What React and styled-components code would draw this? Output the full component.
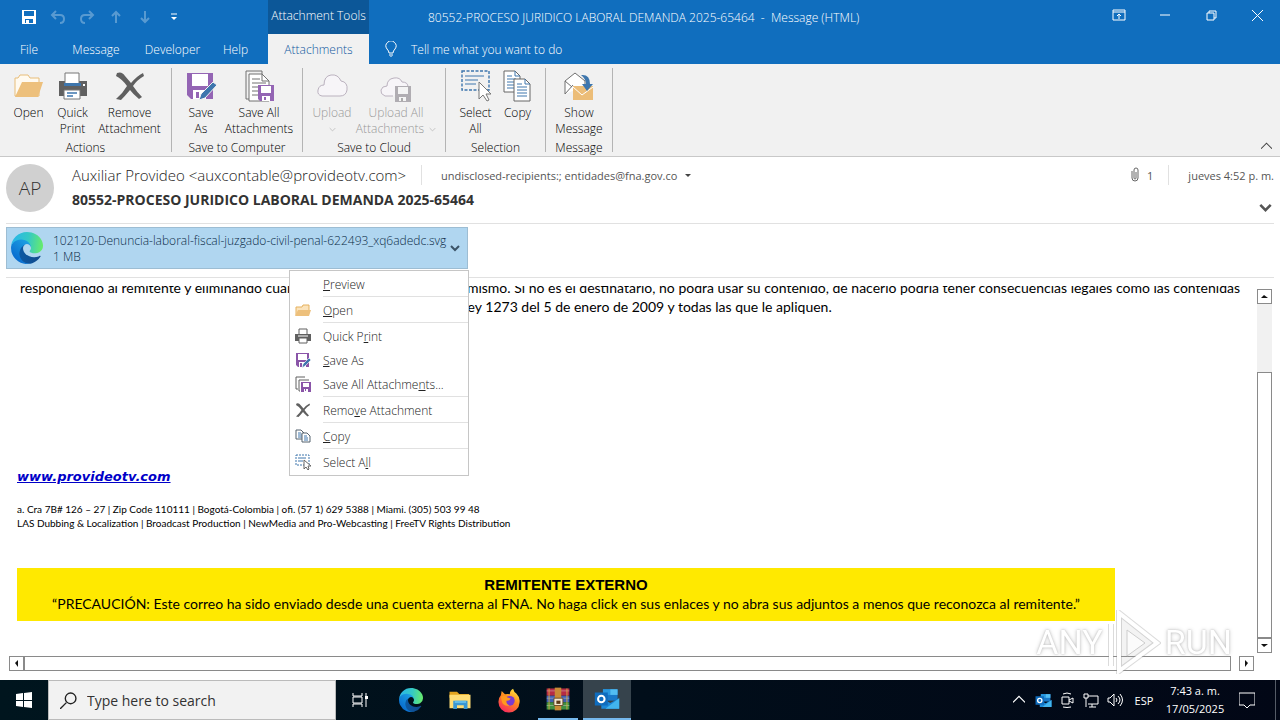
import { Fragment, useState } from "react";
import styled, { createGlobalStyle, css } from "styled-components";

const GlobalStyle = createGlobalStyle`
  * {
    box-sizing: border-box;
  }

  body {
    margin: 0;
    background-color: #fff;
    font-family: "Open Sans", "Noto Sans", sans-serif;
    font-size: 12px;
    font-weight: 340;
    color: #000;
  }

  button {
    margin: 0;
    padding: 0;
    border: 0;
    background: none;
    font: inherit;
    color: inherit;
  }

  svg {
    display: block;
    flex-shrink: 0;
  }
`;

const Window = styled.div`
  display: flex;
  flex-direction: column;
  min-height: 100vh;
  overflow: hidden;
`;

/* title bar and tabs */

const Header = styled.header`
  background-color: #106ebe;
  color: #fff;
`;

const TitleBar = styled.div`
  display: flex;
  height: 34px;
`;

const QuickAccess = styled.div`
  display: flex;
  align-items: center;
  width: 268px;
  padding-left: 14px;
`;

const QuickButton = styled.button`
  display: flex;
  justify-content: center;
  width: 29px;
  opacity: ${(props) => (props.disabled ? 0.3 : 1)};
`;

const ContextTitle = styled.div`
  width: 101px;
  background-color: #0c5798;
  line-height: 32px;
  text-align: center;
  white-space: nowrap;
`;

const WindowTitle = styled.div`
  flex: 1;
  padding-left: 59px;
  line-height: 35px;
  white-space: pre;
`;

const WindowButtons = styled.div`
  display: flex;
`;

const WindowButton = styled.button`
  display: flex;
  align-items: center;
  justify-content: center;
  width: 46px;
  height: 30px;
`;

const Tabs = styled.nav`
  display: flex;
  height: 30px;
  padding-left: 8px;
`;

const Tab = styled.button`
  width: ${(props) => props.$width}px;
  height: 30px;
  ${(props) =>
    props.$active &&
    css`
      background-color: #f1f1f1;
      color: #10599f;
    `}
`;

const TellMe = styled.button`
  display: flex;
  align-items: center;
  gap: 12px;
  padding-left: 14px;
`;

/* ribbon */

const Ribbon = styled.div`
  display: flex;
  height: 93px;
  padding: 4px 8px 4px 0;
  background-color: #f1f1f1;
  border-bottom: 1px solid #c8c8c8;
`;

const Group = styled.section`
  display: flex;
  flex-direction: column;
  justify-content: space-between;
  width: ${(props) => props.$width}px;
  border-right: 1px solid #b4b4b4;
`;

const GroupButtons = styled.div`
  display: flex;
  justify-content: center;
`;

const GroupLabel = styled.div`
  line-height: 8px;
  text-align: center;
`;

const RibbonButton = styled.button`
  display: flex;
  flex-direction: column;
  align-items: center;
  width: ${(props) => props.$width}px;
  padding-top: 2px;
  line-height: 16px;
  white-space: nowrap;
  color: ${(props) => (props.disabled ? "#999" : "#000")};
`;

const ButtonLine = styled.span`
  display: flex;
  align-items: center;
  gap: 5px;
  min-height: 16px;
`;

const ButtonIcon = styled.span`
  display: block;
  height: 35px;
`;

const Collapse = styled.button`
  align-self: flex-end;
  margin-left: auto;
`;

/* message header */

const MessageHeader = styled.section`
  display: flex;
  gap: 18px;
  height: 67px;
  margin: 0 6px;
  padding-top: 7px;
  border-bottom: 1px solid #e1e1e1;
`;

const Avatar = styled.div`
  flex-shrink: 0;
  width: 48px;
  height: 48px;
  border-radius: 50%;
  background-color: #d0d0d0;
  color: #333;
  font-size: 19px;
  line-height: 48px;
  text-align: center;
`;

const HeaderLines = styled.div`
  flex: 1;
`;

const HeaderLine = styled.div`
  display: flex;
  align-items: center;
  height: 22px;
  font-size: 11px;
  font-weight: 400;
  color: #555;
`;

const Sender = styled.span`
  width: 349px;
  font-size: 15px;
  font-weight: 300;
  line-height: 20px;
  color: #222;
  white-space: nowrap;
`;

const Recipients = styled.span`
  display: flex;
  align-items: center;
  gap: 8px;
  flex: 1;
  padding-left: 19px;
`;

const Separator = styled.span`
  width: 1px;
  height: 20px;
  background-color: #e1e1e1;
`;

const AttachmentCount = styled.span`
  display: flex;
  align-items: center;
  gap: 4px;
  padding-right: 15px;
`;

const Received = styled.span`
  padding-left: 19px;
`;

const SubjectLine = styled.div`
  display: flex;
  align-items: flex-end;
  justify-content: space-between;
  height: 28px;
  padding-right: 2px;
`;

const Subject = styled.h1`
  margin: 0;
  font-size: 14px;
  font-weight: 700;
  line-height: 28px;
  color: #333;
`;

const AttachmentBar = styled.section`
  height: 54px;
  margin: 0 6px;
  padding-top: 3px;
  border-bottom: 1px solid #e1e1e1;
`;

const AttachmentItem = styled.div`
  position: relative;
  max-width: 462px;
`;

const AttachmentButton = styled.button`
  display: flex;
  align-items: center;
  width: 100%;
  height: 42px;
  padding: 0 7px 0 4px;
  background-color: #b0d6f0;
  border: 1px solid #9dbdd3;
  color: #0c2c48;
  font-size: 12px;
  font-weight: 300;
  line-height: 16px;
  text-align: left;
`;

const AttachmentText = styled.span`
  flex: 1;
  padding-top: 2px;
  padding-left: 10px;
  white-space: nowrap;
`;

const FileSize = styled.span`
  display: block;
`;

const Menu = styled.div`
  position: absolute;
  z-index: 2;
  top: 43px;
  right: -1px;
  width: 180px;
  padding: 1px 0;
  background-color: #fff;
  border: 1px solid #c6c6c6;
  color: #222;
`;

const MenuItem = styled.button`
  display: flex;
  align-items: center;
  gap: 12px;
  width: 100%;
  height: 24px;
  padding-left: 5px;
`;

const MenuIcon = styled.span`
  width: 16px;
`;

const MenuRule = styled.hr`
  height: 1px;
  margin: 0 0 1px 33px;
  border: 0;
  background-color: #e1e1e1;
`;

/* message body */

const Body = styled.main`
  display: grid;
  flex: 1;
  grid-template-columns: 1fr 15px;
  grid-template-rows: 1fr 15px;
  gap: 3px;
  padding: 8px 8px 9px 9px;
`;

const Content = styled.article`
  height: 367px;
  padding: 0 11px 0 8px;
  overflow: hidden;
  font-family: Lato, sans-serif;
  font-size: 14px;
  font-weight: 400;
  line-height: 19px;
  color: #000;
`;

const Disclaimer = styled.p`
  margin: -8px 0 0;
  height: 188px;
  text-align: center;
  white-space: nowrap;
`;

const SiteLink = styled.a`
  display: inline-block;
  font-family: "DejaVu Sans", Verdana, sans-serif;
  font-size: 13px;
  font-weight: 700;
  font-style: italic;
  color: #0000c8;
`;

const Address = styled.address`
  margin: 16px 0 38px;
  font-size: 10px;
  font-style: normal;
  line-height: 14px;
`;

const Banner = styled.aside`
  max-width: 1098px;
  padding: 8px 0;
  background-color: #ffe900;
  text-align: center;
`;

const BannerTitle = styled.strong`
  display: block;
  font-family: "Liberation Sans", Arial, sans-serif;
  font-size: 15px;
  font-weight: 700;
  line-height: 18px;
`;

const ScrollBar = styled.div`
  display: flex;
  flex-direction: ${(props) => (props.$vertical ? "column" : "row")};
  ${(props) =>
    props.$vertical &&
    css`
      margin-top: 3px;
      background-color: #f1f1f1;
    `}
`;

const ScrollButton = styled.button`
  display: flex;
  align-items: center;
  justify-content: center;
  width: 15px;
  height: 15px;
  border: 1px solid #8a8a8a;
  background-color: #fff;
`;

const ScrollSpace = styled.div`
  flex: 0 0 ${(props) => props.$size}px;
`;

const ScrollThumb = styled.div`
  flex: 1;
  background-color: #fff;
  border: 1px solid #8a8a8a;
`;

const Watermark = styled.div`
  position: fixed;
  z-index: 3;
  right: 48px;
  bottom: 46px;
  display: flex;
  align-items: center;
  gap: 4px;
  color: #fff;
  font-family: Roboto, sans-serif;
  font-size: 34px;
  font-weight: 400;
  text-shadow: 0 0 2px #bbb, 0 0 4px #ccc;
  pointer-events: none;
`;

/* taskbar */

const Taskbar = styled.footer`
  display: flex;
  height: 40px;
  background: linear-gradient(90deg, #00151e, #020716);
  color: #fff;
`;

const TaskButton = styled.button`
  display: flex;
  align-items: center;
  justify-content: center;
  width: 48px;
  height: 40px;
  ${(props) =>
    props.$running &&
    css`
      width: 40px;
      margin: 0 4px;
      border-bottom: 2px solid #76b9ed;
    `}
  ${(props) =>
    props.$active &&
    css`
      background-color: #36434c;
      border-bottom: 2px solid #76b9ed;
    `}
`;

const SearchBox = styled.label`
  display: flex;
  align-items: center;
  gap: 10px;
  width: 288px;
  padding-left: 11px;
  background-color: #f2f2f2;
  border: 1px solid #bbb;
`;

const SearchInput = styled.input`
  width: 200px;
  padding: 0;
  border: 0;
  outline: 0;
  background: none;
  font-family: inherit;
  font-size: 14px;
  font-weight: 400;

  &::placeholder {
    color: #333;
    opacity: 1;
  }
`;

const Pinned = styled.div`
  display: flex;
  gap: 1px;
  padding-left: 3px;
`;

const Tray = styled.div`
  display: flex;
  align-items: center;
  margin-left: auto;
`;

const TrayButton = styled.button`
  display: flex;
  align-items: center;
  justify-content: center;
  width: ${(props) => props.$width || 24}px;
  font-size: 11px;
  font-weight: 400;
`;

const Clock = styled.time`
  width: 68px;
  font-size: 11px;
  font-weight: 400;
  line-height: 18px;
  text-align: center;
`;

const ShowDesktop = styled.button`
  align-self: stretch;
  width: 5px;
  margin-left: 10px;
  border-left: 1px solid #555b66;
`;

/* icons */

const Icon = ({ size = 16, box = 32, children }) => (
  <svg width={size} height={size} viewBox={`0 0 ${box} ${box}`} fill="none" aria-hidden="true">
    {children}
  </svg>
);

const Chevron = ({ up, size = 10, weight = 1, color = "#444" }) => (
  <Icon size={size} box={10}>
    <path d={up ? "M0 7l5-5 5 5" : "M1 3l4 4 4-4"} stroke={color} strokeWidth={weight} />
  </Icon>
);

const Arrow = ({ d }) => (
  <Icon size={9} box={9}>
    <path d={d} fill="#111" />
  </Icon>
);

const FolderIcon = ({ size }) => (
  <Icon size={size}>
    <path d="M2 26V8h3l2-3h8l2 3h9v18z" fill="#fffaf0" stroke="#e8bd78" />
    <path d="M2 27L9 12h21l-5 15z" fill="#edc07c" />
  </Icon>
);

const SmallFolderIcon = ({ size }) => (
  <Icon size={size} box={16}>
    <path d="M1 13V5h6l1-2h6v5" fill="#fbe3bb" stroke="#e5b15e" />
    <path d="M0 14l3-6h13l-2 6z" fill="#edc07c" />
  </Icon>
);

const PrinterIcon = ({ size }) => (
  <Icon size={size}>
    <path d="M2 11h28v15H2z" fill="#606060" />
    <path d="M8 14V3h14v11z" fill="#fff" stroke="#777" />
    <path d="M7 13h17v3H7z" fill="#3e76ad" />
    <path d="M7 20h16v9H7z" fill="#fff" stroke="#777" />
    <path d="M10 23h10M10 26h6" stroke="#3e76ad" strokeWidth="1.5" />
    <path d="M26 14h2v2h-2z" fill="#fff" />
  </Icon>
);

const SmallPrinterIcon = ({ size }) => (
  <Icon size={size} box={16}>
    <path d="M0 6h16v7H0z" fill="#606060" />
    <path d="M4 6V1h8v5" fill="#fff" stroke="#606060" />
    <path d="M4 10h8v5H4z" fill="#fff" stroke="#606060" />
    <path d="M3 8h10" stroke="#fff" />
  </Icon>
);

const RemoveIcon = ({ size }) => (
  <Icon size={size}>
    <path
      d="M3 3q5-2 8 3l6 7q6-7 12-10l1 3q-7 4-11 10 4 6 9 11l-3 2q-6-5-9-9-5 6-9 10l-5-1q7-6 11-13Q8 9 2 6z"
      fill="#606060"
    />
  </Icon>
);

const FloppyPenIcon = ({ size }) => (
  <Icon size={size}>
    <path d="M2 3h26v26H6l-4-4z" fill="#9465b4" />
    <path d="M7 4h16v12H7z" fill="#fff" />
    <path d="M8 20h13v9H8z" fill="#fff" />
    <path d="M11 22h3v6h-3z" fill="#9465b4" />
    <path d="M14 30l2-6 12-12 4 3-12 13z" fill="#3e76ad" stroke="#f1f1f1" />
  </Icon>
);

const SmallFloppyPenIcon = ({ size }) => (
  <Icon size={size} box={16}>
    <path d="M1 1h13v14H3l-2-2z" fill="#8a55a8" />
    <path d="M3 2h9v6H3zM4 10h7v5H4z" fill="#fff" />
    <path d="M5 11h2v4H5z" fill="#8a55a8" />
    <path d="M7 16l1-4 6-6 2 2-6 6z" fill="#3e76ad" stroke="#fff" strokeWidth="0.600" />
  </Icon>
);

const FloppySheetsIcon = ({ size }) => (
  <Icon size={size}>
    <path d="M7 29H3V1h16v4" stroke="#707070" />
    <path d="M6 31V4h13l7 7v20z" fill="#fff" stroke="#707070" />
    <path d="M19 4v7h7M9 9h8M9 13h14M9 17h14M9 21h8M9 25h8" stroke="#707070" />
    <path d="M15 15h16v16H17l-2-2z" fill="#9465b4" />
    <path d="M18 16h10v7H18zM19 26h8v5h-8z" fill="#fff" />
    <path d="M21 27h2v3h-2z" fill="#9465b4" />
  </Icon>
);

const SmallFloppySheetsIcon = ({ size }) => (
  <Icon size={size} box={16}>
    <path d="M3 13H1V1h9M5 15H4V4h10" stroke="#606060" />
    <path d="M6 6h10v10H6z" fill="#8a55a8" />
    <path d="M8 7h6v4H8zM9 13h4v3H9z" fill="#fff" />
    <path d="M10 13h1v2h-1z" fill="#8a55a8" />
  </Icon>
);

const CloudIcon = () => (
  <Icon size={32}>
    <path d="M6 26Q1 25 2 20q1-5 6-5Q8 6 15 5q7-1 10 6 7 1 6 9-1 6-7 6z" fill="#f7f5f8" stroke="#bbb2bf" />
  </Icon>
);

const CloudFloppyIcon = () => (
  <Icon size={32}>
    <path d="M13 26H5q-5-2-4-6 1-4 6-4 0-7 7-8 6-1 8 4 6 0 6 5" fill="#f7f5f8" stroke="#bbb2bf" />
    <path d="M15 16h16v16H15z" fill="#b0adb2" />
    <path d="M18 17h10v7H18zM19 27h7v4h-7z" fill="#f4f4f4" />
    <path d="M21 28h2v3h-2z" fill="#aaa" />
  </Icon>
);

const SelectIcon = ({ size }) => (
  <Icon size={size}>
    <path d="M2 1h27v19H2z" stroke="#3e76ad" strokeWidth="1.4" strokeDasharray="3 1.5" />
    <path d="M5 6h19M5 10h13M5 14h11" stroke="#3e76ad" />
    <path d="M19 12v17l4-4 4 6 2-1-3-6h5z" fill="#fff" stroke="#777" />
  </Icon>
);

const SmallSelectIcon = ({ size }) => (
  <Icon size={size} box={16}>
    <path d="M1 1h13v10H1z" stroke="#3e76ad" strokeDasharray="2 1" />
    <path d="M3 4h8M3 7h5" stroke="#3e76ad" />
    <path d="M9 6v9l2-2 2 3 1-1-1-3h3z" fill="#fff" stroke="#666" />
  </Icon>
);

const CopyIcon = ({ size }) => (
  <Icon size={size}>
    <path d="M2 22V1h11l5 5v16z" fill="#fff" stroke="#666" />
    <path d="M13 1v5h5M5 6h5M5 9h9M5 12h9M5 15h9M5 18h9" stroke="#3e76ad" />
    <path d="M12 31V9h11l5 5v17z" fill="#fff" stroke="#666" />
    <path d="M23 9v5h5M15 14h5M15 17h10M15 20h10M15 23h10M15 26h10" stroke="#3e76ad" />
  </Icon>
);

const SmallCopyIcon = ({ size }) => (
  <Icon size={size} box={16}>
    <path d="M1 11V2h5l3 3v6z" fill="#fff" stroke="#55626e" />
    <path d="M3 5h3M3 7h4M3 9h4" stroke="#3e76ad" />
    <path d="M7 14V5h5l3 3v6z" fill="#fff" stroke="#55626e" />
    <path d="M9 8h3M9 10h4M9 12h4" stroke="#3e76ad" />
  </Icon>
);

const ShowMessageIcon = () => (
  <Icon size={32}>
    <path d="M2 24V11L12 3l10 8v5" fill="#fff" stroke="#707070" />
    <path d="M2 24l8-9M2 11l7 6" stroke="#707070" />
    <path d="M10 16h20v14H10z" fill="#ecbd78" />
    <path d="M10 17l9 8 11-8" stroke="#fff" />
    <path d="M18 5q9-1 9 9h3l-6 7-5-7h4q0-5-5-9z" fill="#3e76ad" />
  </Icon>
);

const EdgeIcon = ({ size }) => (
  <Icon size={size} box={256}>
    <defs>
      <linearGradient id="edgeDark" x1="60" y1="180" x2="240" y2="180" gradientUnits="userSpaceOnUse">
        <stop stopColor="#0c59a4" />
        <stop offset="1" stopColor="#114a8b" />
      </linearGradient>
      <linearGradient id="edgeBlue" x1="150" y1="100" x2="45" y2="215" gradientUnits="userSpaceOnUse">
        <stop stopColor="#1b9de2" />
        <stop offset="1" stopColor="#0a6fd0" />
      </linearGradient>
      <linearGradient id="edgeGreen" x1="20" y1="80" x2="250" y2="110" gradientUnits="userSpaceOnUse">
        <stop stopColor="#2ab8e6" />
        <stop offset="0.5" stopColor="#35c9c4" />
        <stop offset="1" stopColor="#66eb6e" />
      </linearGradient>
    </defs>
    <path
      fill="url(#edgeDark)"
      d="M231 190.500a93.700 93.700 0 0 1-10.500 4.700 101.900 101.900 0 0 1-35.900 6.500c-47.300 0-88.500-32.600-88.500-74.300a31.500 31.500 0 0 1 16.400-27.300c-42.800 1.800-53.800 46.400-53.800 72.500 0 73.900 68.100 81.400 82.800 81.400 7.900 0 19.800-2.300 27-4.600l1.300-.4a128.300 128.300 0 0 0 66.600-52.800 4 4 0 0 0-5.400-5.700z"
    />
    <path
      fill="url(#edgeBlue)"
      d="M105.700 241.400a79.200 79.200 0 0 1-22.700-21.300 80.700 80.700 0 0 1 29.500-120c3.100-1.500 8.500-4.100 15.500-4a32.400 32.400 0 0 1 25.700 13 31.900 31.900 0 0 1 6.400 18.700c0-.2 24.500-79.600-80-79.600-43.900 0-80 41.600-80 78.200a130.200 130.200 0 0 0 12.100 56 128 128 0 0 0 156.400 67.100 75.600 75.600 0 0 1-62.800-8z"
    />
    <path
      fill="url(#edgeGreen)"
      d="M152.300 148.900c-.8 1-3.300 2.500-3.300 5.700 0 2.600 1.700 5.100 4.700 7.200 14.400 10 41.500 8.700 41.600 8.700a59.600 59.600 0 0 0 30.300-8.400A61.400 61.400 0 0 0 256 109.200c.3-22.400-8-37.300-11.300-43.900C223.500 23.800 177.700 0 128 0A128 128 0 0 0 0 126.200c.5-36.500 36.800-66 80-66 3.500 0 23.500.3 42 10 16.300 8.600 24.900 19 30.900 29.200 6.200 10.700 7.300 24.200 7.300 29.500s-2.800 13.400-7.900 20z"
    />
  </Icon>
);

const OutlookIcon = ({ size }) => (
  <Icon size={size}>
    <path d="M11 4h18v14H11z" fill="#1978c8" />
    <path d="M11 4h9v7h-9z" fill="#2898e0" />
    <path d="M20 4h9v7h-9z" fill="#52bdf2" />
    <path d="M9 15l11 6 11-6v13H9z" fill="#1b88d8" />
    <path d="M31 15v13H14z" fill="#42b5ee" />
    <path d="M1 8h16v16H1z" fill="#0f6cbd" />
    <circle cx="9" cy="16" r="4" stroke="#fff" strokeWidth="2.500" />
  </Icon>
);

const ExplorerIcon = () => (
  <Icon size={24}>
    <path d="M2 5h10l3 3h13v5H2z" fill="#e3a41e" />
    <path d="M2 9h28v18H2z" fill="#ffdd75" />
    <path d="M7 28V17h19v11h-5v-5h-9v5z" fill="#3997d3" />
    <path d="M9 17h15v3H9z" fill="#62bce8" />
  </Icon>
);

const FirefoxIcon = () => (
  <Icon size={26}>
    <defs>
      <linearGradient id="fox" x1="24" y1="3" x2="8" y2="29" gradientUnits="userSpaceOnUse">
        <stop stopColor="#ffe53e" />
        <stop offset="0.450" stopColor="#ff8a1e" />
        <stop offset="1" stopColor="#f82c5c" />
      </linearGradient>
    </defs>
    <path d="M7 5l4 4q4-1 6 0 0-5 4-7 1 4 4 6 5 5 4 11a13 13 0 0 1-26-1q0-5 3-8z" fill="url(#fox)" />
    <circle cx="17" cy="17" r="6" fill="#7a3bd0" />
    <path d="M6 12q5-3 8 1l4 1q-1 3-5 3-1 4 4 6-9 1-10-6z" fill="#ff9a1e" />
  </Icon>
);

const WinrarIcon = () => (
  <Icon size={26}>
    <path d="M2 3h28v9H2z" fill="#b52b45" />
    <path d="M2 12h28v8H2z" fill="#4060b0" />
    <path d="M2 20h28v9H2z" fill="#3e8f42" />
    <path d="M2 6h28M2 15h28M2 24h28" stroke="#ddd" strokeOpacity="0.500" />
    <path d="M12 2h8v28h-8z" fill="#c98a36" />
    <path d="M11 15h11v9H11z" fill="#f1e6ce" stroke="#5b3a17" />
    <path d="M14 18h5v4h-5z" fill="#5b3a17" />
    <path d="M5 3v26M27 3v26" stroke="#e0b23d" />
  </Icon>
);

const groups = [
  {
    label: "Actions",
    width: 172,
    buttons: [
      { lines: ["Open"], width: 44, icon: FolderIcon },
      { lines: ["Quick", "Print"], width: 44, icon: PrinterIcon },
      { lines: ["Remove", "Attachment"], width: 70, icon: RemoveIcon },
    ],
  },
  {
    label: "Save to Computer",
    width: 131,
    buttons: [
      { lines: ["Save", "As"], width: 44, icon: FloppyPenIcon },
      { lines: ["Save All", "Attachments"], width: 72, icon: FloppySheetsIcon },
    ],
  },
  {
    label: "Save to Cloud",
    width: 143,
    buttons: [
      { lines: ["Upload", ""], width: 44, icon: CloudIcon, disabled: true },
      { lines: ["Upload All", "Attachments"], width: 84, icon: CloudFloppyIcon, disabled: true },
    ],
  },
  {
    label: "Selection",
    width: 100,
    buttons: [
      { lines: ["Select", "All"], width: 44, icon: SelectIcon },
      { lines: ["Copy"], width: 40, icon: CopyIcon },
    ],
  },
  {
    label: "Message",
    width: 67,
    buttons: [{ lines: ["Show", "Message"], width: 60, icon: ShowMessageIcon }],
  },
];

//the key is the underlined letter of the label
const menuItems = [
  { before: "", key: "P", after: "review", rule: true },
  { before: "", key: "O", after: "pen", icon: SmallFolderIcon, rule: true },
  { before: "Quick P", key: "r", after: "int", icon: SmallPrinterIcon },
  { before: "", key: "S", after: "ave As", icon: SmallFloppyPenIcon },
  { before: "Save All Attachme", key: "n", after: "ts...", icon: SmallFloppySheetsIcon, rule: true },
  { before: "Remo", key: "v", after: "e Attachment", icon: RemoveIcon, rule: true },
  { before: "", key: "C", after: "opy", icon: SmallCopyIcon, rule: true },
  { before: "Select A", key: "l", after: "l", icon: SmallSelectIcon },
];

const TopBar = () => (
  <Header>
    <TitleBar>
      <QuickAccess>
        <QuickButton aria-label="Save">
          <Icon size={16} box={16}>
            <path d="M1 1h14v14H1z" fill="#fff" />
            <path d="M3 2h10v5H3zM4 10h8v4H4z" fill="#106ebe" />
            <path d="M5 11h3v4H5z" fill="#fff" />
          </Icon>
        </QuickButton>
        <QuickButton aria-label="Undo" disabled>
          <Icon size={16} box={16}>
            <path d="M6 2L2 6l4 4M2 6h8q4 0 4 4t-4 4" stroke="#fff" strokeWidth="2" />
          </Icon>
        </QuickButton>
        <QuickButton aria-label="Redo" disabled>
          <Icon size={16} box={16}>
            <path d="M10 2l4 4-4 4M14 6H6q-4 0-4 4t4 4" stroke="#fff" strokeWidth="2" />
          </Icon>
        </QuickButton>
        <QuickButton aria-label="Previous Item" disabled>
          <Icon size={16} box={16}>
            <path d="M8 14V3M4 7l4-4 4 4" stroke="#fff" strokeWidth="2" />
          </Icon>
        </QuickButton>
        <QuickButton aria-label="Next Item" disabled>
          <Icon size={16} box={16}>
            <path d="M8 2v11M4 9l4 4 4-4" stroke="#fff" strokeWidth="2" />
          </Icon>
        </QuickButton>
        <QuickButton aria-label="Customize">
          <Icon size={8} box={8}>
            <path d="M1 1h6" stroke="#fff" />
            <path d="M1 4h6L4 7z" fill="#fff" />
          </Icon>
        </QuickButton>
      </QuickAccess>
      <ContextTitle>Attachment Tools</ContextTitle>
      <WindowTitle>80552-PROCESO JURIDICO LABORAL DEMANDA 2025-65464  -  Message (HTML)</WindowTitle>
      <WindowButtons>
        <WindowButton aria-label="Ribbon Display Options">
          <Icon size={14} box={14}>
            <path d="M1 2h12v10H1zM1 4h12M7 11V6M5 8l2-2 2 2" stroke="#fff" />
          </Icon>
        </WindowButton>
        <WindowButton aria-label="Minimize">
          <Icon size={10} box={10}>
            <path d="M0 5h10" stroke="#fff" />
          </Icon>
        </WindowButton>
        <WindowButton aria-label="Restore">
          <Icon size={11} box={11}>
            <path d="M1 3h7v7H1zM3 3V1h7v7H8" stroke="#fff" />
          </Icon>
        </WindowButton>
        <WindowButton aria-label="Close">
          <Icon size={11} box={11}>
            <path d="M0 0l11 11M11 0L0 11" stroke="#fff" />
          </Icon>
        </WindowButton>
      </WindowButtons>
    </TitleBar>
    <Tabs>
      <Tab $width={42}>File</Tab>
      <Tab $width={92}>Message</Tab>
      <Tab $width={61}>Developer</Tab>
      <Tab $width={65}>Help</Tab>
      <Tab $width={101} $active>
        Attachments
      </Tab>
      <TellMe>
        <Icon size={16} box={16}>
          <path d="M6 12Q6 10 4 8a5 5 0 1 1 8 0q-2 2-2 4zM6 14h4M7 16h2" stroke="#fff" />
        </Icon>
        Tell me what you want to do
      </TellMe>
    </Tabs>
  </Header>
);

const RibbonBar = () => (
  <Ribbon>
    {groups.map((group) => (
      <Group key={group.label} $width={group.width}>
        <GroupButtons>
          {group.buttons.map(({ lines, width, icon: ItemIcon, disabled }) => (
            <RibbonButton key={lines.join(" ")} $width={width} disabled={disabled}>
              <ButtonIcon>
                <ItemIcon size={32} />
              </ButtonIcon>
              {lines.map((line, i) => (
                <ButtonLine key={i}>
                  {line}
                  {disabled && i === 1 && <Chevron size={7} color="#b1b1b1" />}
                </ButtonLine>
              ))}
            </RibbonButton>
          ))}
        </GroupButtons>
        <GroupLabel>{group.label}</GroupLabel>
      </Group>
    ))}
    <Collapse aria-label="Collapse the Ribbon">
      <Chevron up size={11} />
    </Collapse>
  </Ribbon>
);

const MessageInfo = () => (
  <MessageHeader>
    <Avatar>AP</Avatar>
    <HeaderLines>
      <HeaderLine>
        <Sender>Auxiliar Provideo &lt;auxcontable@provideotv.com&gt;</Sender>
        <Separator />
        <Recipients>
          undisclosed-recipients:; entidades@fna.gov.co
          <Icon size={6} box={6}>
            <path d="M0 2h6L3 5z" fill="#444" />
          </Icon>
        </Recipients>
        <AttachmentCount>
          <Icon size={16} box={16}>
            <path d="M5 4v7a3 3 0 0 0 6 0V3a2 2 0 0 0-4 0v8a1 1 0 0 0 2 0V5" stroke="#666" />
          </Icon>
          1
        </AttachmentCount>
        <Separator />
        <Received>jueves 4:52 p. m.</Received>
      </HeaderLine>
      <SubjectLine>
        <Subject>80552-PROCESO JURIDICO LABORAL DEMANDA 2025-65464</Subject>
        <button aria-label="Expand header">
          <Chevron size={13} weight={2} color="#555" />
        </button>
      </SubjectLine>
    </HeaderLines>
  </MessageHeader>
);

const Attachments = () => {
  const [menuOpen, setMenuOpen] = useState(true);

  return (
    <AttachmentBar>
      <AttachmentItem>
        <AttachmentButton onClick={() => setMenuOpen(!menuOpen)}>
          <EdgeIcon size={32} />
          <AttachmentText>
            102120-Denuncia-laboral-fiscal-juzgado-civil-penal-622493_xq6adedc.svg
            <FileSize>1 MB</FileSize>
          </AttachmentText>
          <Chevron size={10} weight={2} color="#3c5468" />
        </AttachmentButton>
        {menuOpen && (
          <Menu>
            {menuItems.map(({ before, key, after, icon: ItemIcon, rule }) => (
              <Fragment key={before + key + after}>
                <MenuItem>
                  <MenuIcon>{ItemIcon && <ItemIcon size={16} />}</MenuIcon>
                  <span>
                    {before}
                    <u>{key}</u>
                    {after}
                  </span>
                </MenuItem>
                {rule && <MenuRule />}
              </Fragment>
            ))}
          </Menu>
        )}
      </AttachmentItem>
    </AttachmentBar>
  );
};

const MessageBody = () => (
  <Body>
    <Content>
      <Disclaimer>
        respondiendo al remitente y eliminando cualquier copia que se posea del mismo. Si no es el destinatario, no
        podrá usar su contenido, de hacerlo podría tener consecuencias legales como las contenidas
        <br />
        en la Ley 1273 del 5 de enero de 2009 y todas las que le apliquen.
      </Disclaimer>
      <SiteLink href="#site">www.provideotv.com</SiteLink>
      <Address>
        a. Cra 7B# 126 – 27 | Zip Code 110111 | Bogotá-Colombia | ofi. (57 1) 629 5388 | Miami. (305) 503 99 48
        <br />
        LAS Dubbing &amp; Localization | Broadcast Production | NewMedia and Pro-Webcasting | FreeTV Rights Distribution
      </Address>
      <Banner>
        <BannerTitle>REMITENTE EXTERNO</BannerTitle>
        “PRECAUCIÓN: Este correo ha sido enviado desde una cuenta externa al FNA. No haga click en sus enlaces y no abra
        sus adjuntos a menos que reconozca al remitente.”
      </Banner>
    </Content>
    <ScrollBar $vertical>
      <ScrollButton aria-label="Scroll up">
        <Arrow d="M1 6l3-3 4 3z" />
      </ScrollButton>
      <ScrollSpace $size={68} />
      <ScrollThumb />
      <ScrollButton aria-label="Scroll down">
        <Arrow d="M1 3h7L4 6z" />
      </ScrollButton>
    </ScrollBar>
    <ScrollBar>
      <ScrollButton aria-label="Scroll left">
        <Arrow d="M6 1v7L3 4z" />
      </ScrollButton>
      <ScrollThumb />
      <ScrollSpace $size={8} />
      <ScrollButton aria-label="Scroll right">
        <Arrow d="M3 1v7l3-4z" />
      </ScrollButton>
    </ScrollBar>
  </Body>
);

const WindowsTaskbar = () => (
  <Taskbar>
    <TaskButton aria-label="Start">
      <Icon size={16} box={16}>
        <path d="M0 2l7-1v7H0zM8 1l8-1v8H8zM0 9h7v6l-7-1zM8 9h8v7l-8-1z" fill="#fff" />
      </Icon>
    </TaskButton>
    <SearchBox>
      <Icon size={17} box={16}>
        <circle cx="10" cy="6" r="5" stroke="#222" strokeWidth="1.300" />
        <path d="M6 10l-6 6" stroke="#222" strokeWidth="1.300" />
      </Icon>
      <SearchInput type="text" placeholder="Type here to search" aria-label="Search" />
    </SearchBox>
    <TaskButton aria-label="Task View">
      <Icon size={18} box={18}>
        <path d="M2 2v3h9V2M2 16v-3h9v3M2 6h9v6H2zM15 2v14" stroke="#fff" />
        <path d="M14 5h3v3h-3z" fill="#fff" />
      </Icon>
    </TaskButton>
    <Pinned>
      <TaskButton aria-label="Microsoft Edge">
        <EdgeIcon size={24} />
      </TaskButton>
      <TaskButton aria-label="File Explorer">
        <ExplorerIcon />
      </TaskButton>
      <TaskButton aria-label="Firefox">
        <FirefoxIcon />
      </TaskButton>
      <TaskButton aria-label="WinRAR" $running>
        <WinrarIcon />
      </TaskButton>
      <TaskButton aria-label="Outlook" $active>
        <OutlookIcon size={26} />
      </TaskButton>
    </Pinned>
    <Tray>
      <TrayButton aria-label="Show hidden icons">
        <Chevron up size={12} color="#fff" />
      </TrayButton>
      <TrayButton aria-label="Outlook">
        <OutlookIcon size={17} />
      </TrayButton>
      <TrayButton aria-label="Meet Now">
        <Icon size={16} box={16}>
          <path d="M3 5h7v7H3zM10 8l4-2v5l-4-2M4 2q4-2 8 0M4 15q4 1 8 0" stroke="#fff" />
        </Icon>
      </TrayButton>
      <TrayButton aria-label="Network">
        <Icon size={16} box={16}>
          <path d="M5 4h10v8H5M9 12v3M6 15h7M1 2h4v4H1zM3 6v9" stroke="#fff" />
        </Icon>
      </TrayButton>
      <TrayButton aria-label="Volume">
        <Icon size={16} box={16}>
          <path d="M1 6h2l4-4v12l-4-4H1zM9 6q2 2 0 4M11 4q4 4 0 8M13 2q5 6 0 12" stroke="#fff" />
        </Icon>
      </TrayButton>
      <TrayButton $width={34}>ESP</TrayButton>
      <Clock>
        7:43 a. m.
        <br />
        17/05/2025
      </Clock>
      <TrayButton $width={36} aria-label="Notifications">
        <Icon size={16} box={16}>
          <path d="M0 1h16v12h-5l-3 3-3-3H0z" stroke="#fff" />
        </Icon>
      </TrayButton>
      <ShowDesktop aria-label="Show desktop" />
    </Tray>
  </Taskbar>
);

const App = () => (
  <Window>
    <GlobalStyle />
    <TopBar />
    <RibbonBar />
    <MessageInfo />
    <Attachments />
    <MessageBody />
    <WindowsTaskbar />
    <Watermark aria-hidden="true">
      <span>ANY</span>
      <svg width="54" height="64" viewBox="0 0 54 64" fill="none">
        <path d="M4 56V14M12 3v58l38-28z" stroke="#999" strokeOpacity="0.350" strokeWidth="6" />
        <path d="M4 56V14M12 3v58l38-28z" fill="#999" fillOpacity="0.120" stroke="#fff" strokeWidth="4" />
        <path d="M20 20v26l18-13z" fill="#fff" fillOpacity="0.700" stroke="#ccc" />
      </svg>
      <span>RUN</span>
    </Watermark>
  </Window>
);

export default App;
